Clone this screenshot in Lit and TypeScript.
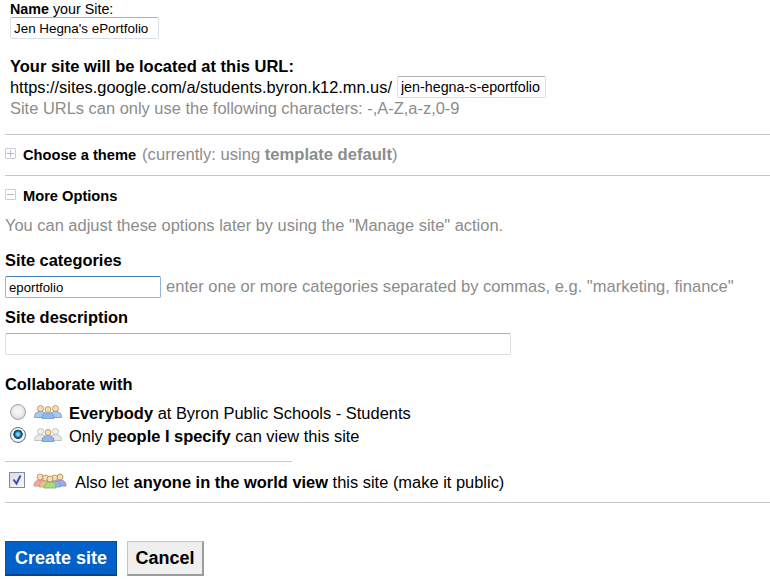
import { LitElement, html, css, svg } from "lit";
import { customElement } from "lit/decorators.js";

const person = (x: number, y: number, skin: string, body: string, edge: string, head = "#a98a5e") => svg`
  <path d="M${x - 6} ${y + 12}c0-4 2.200-6 6-6s6 2 6 6z" fill="${body}" stroke="${edge}" stroke-width=".8"/>
  <circle cx="${x}" cy="${y + 3}" r="3" fill="${skin}" stroke="${head}" stroke-width=".8"/>`;

const skin = "#fbdcae";
const blue = "#a9c8f2";
const blueEdge = "#6f94c8";
const grayBody = "#e8e8e8";
const grayEdge = "#b8b8b8";

const groupBlue = svg`<svg class="ppl" width="28" height="14" viewBox="0 0 28 14">
  ${person(6.5, 0.5, skin, blue, blueEdge)}${person(21.5, 0.5, skin, blue, blueEdge)}${person(14, 1.500, skin, "#8fb6ee", blueEdge)}</svg>`;
const groupGray = svg`<svg class="ppl" width="28" height="14" viewBox="0 0 28 14">
  ${person(6.5, 0.5, "#f0f0f0", grayBody, grayEdge, grayEdge)}${person(21.5, 0.5, "#f0f0f0", grayBody, grayEdge, grayEdge)}${person(14, 1.500, skin, "#8fb6ee", blueEdge)}</svg>`;
const groupWorld = svg`<svg class="ppl" width="34" height="16" viewBox="0 0 34 16">
  ${person(7, 1, skin, "#f3a6a0", "#c98580")}${person(27, 1, skin, "#a7a6ea", "#7d7cc4")}
  ${person(12.500, 2, skin, "#f4c48e", "#c99a66")}${person(21.500, 2, skin, "#8fb6ee", blueEdge)}${person(17, 3, skin, "#a9dc7e", "#80b058")}</svg>`;

@customElement("app-root")
export class AppRoot extends LitElement {
  static styles = css`
    :host { display: block; width: 770px; height: 579px; overflow: hidden; background: #fff; color: #000;
      font-family: "Liberation Sans", Arial, sans-serif; font-size: 16.45px; line-height: 18px; }
    .page { padding: 1px 0 0 5px; }
    .name { padding-left: 5px; font-size: 14.3px; line-height: 16px; }
    input[type="text"] { display: block; box-sizing: border-box; margin: 0; padding: 0 3px; background: #fff; color: #000;
      font: 13.4px "Liberation Sans", Arial, sans-serif; outline: none;
      border: 1px solid #dcdfe4; border-top-color: #b0b0b0; border-radius: 2px; }
    .site-name { width: 149px; height: 22px; }
    .url { padding-left: 5px; margin-top: 18px; }
    .url h2 { margin: 0; font-size: 16.5px; line-height: 18px; font-weight: bold; }
    .url-row { display: flex; align-items: center; gap: 5px; height: 22px; margin-top: 1px; font-size: 16.36px; }
    .url-row input { width: 149px; height: 22px; font-size: 14.3px; }
    .hint { color: #8c8c8c; }
    .url .hint { margin-top: 0; line-height: 20px; }
    hr { border: 0; height: 1px; background: #c8c8c8; margin: 0; }
    .h1 { margin-top: 16px; }
    .toggle { display: flex; align-items: center; font-size: 14.65px; line-height: 16px; font-weight: bold; }
    .box { box-sizing: border-box; width: 11px; height: 11px; border: 1px solid #c9cdd6; margin-right: 7px; margin-top: -4px;
      display: block; position: relative; flex: none; border-radius: 1px; }
    .box::before { content: ""; position: absolute; left: 1px; right: 1px; top: 4px; height: 1px; background: #b4b8c2; }
    .box.plus::after { content: ""; position: absolute; top: 1px; bottom: 1px; left: 4px; width: 1px; background: #b4b8c2; }
    .theme { height: 40px; }
    .theme .rest { font-size: 16.6px; font-weight: normal; color: #8c8c8c; margin-left: 6px; }
    .theme .rest b { font-weight: bold; }
    .more { margin-top: 12px; }
    .adjust { margin-top: 12px; line-height: 18px; }
    .label { margin: 0; font-size: 16.4px; font-weight: bold; line-height: 18px; }
    .cats { margin-top: 17px; }
    .cat-row { display: flex; align-items: center; gap: 5px; margin-top: 7px; height: 22px; }
    .cat-row input { width: 156px; height: 22px; border-color: #8fb6d8; border-top-color: #3f7fb5; font-size: 13.2px; }
    .cat-row .hint { font-size: 16.55px; }
    .desc { margin-top: 10px; }
    input.desc-in[type="text"] { width: 506px; height: 22px; margin-top: 7px; }
    .collab { margin-top: 20px; }
    .opt { display: flex; align-items: center; height: 23px; padding-left: 5px; }
    .opts { margin-top: 8px; }
    .radio { width: 16px; height: 16px; border-radius: 50%; flex: none; box-sizing: border-box; border: 1px solid #a4a4a4;
      background: radial-gradient(circle at 50% 45%, #f4f4f4 0 30%, #e4e4e4 60%, #bdbdbd 100%); margin-right: 8px; margin-top: -2px; }
    .radio.on { border-color: #6a6f78; background: radial-gradient(circle at 50% 45%, #7ed0ee 0 12%, #0e6fa6 30%, #063f6a 42%, #fff 48%, #e2e2e2 80%, #b0b0b0 100%); }
    .ppl { display: block; flex: none; margin-right: 7px; margin-top: -2px; }
    .short { width: 287px; margin-top: 14px; }
    .world { display: flex; align-items: center; height: 40px; padding-left: 4px; }
    .check { box-sizing: border-box; width: 16px; height: 16px; border: 1px solid #7f8aa3; background: linear-gradient(135deg, #dcdce4, #f7f7fa);
      margin-right: 8px; flex: none; display: block; margin-top: -4px; }
    .world .ppl { margin-right: 8px; }
    .actions { display: flex; gap: 10px; margin-top: 38px; }
    button { box-sizing: border-box; height: 35px; margin: 0; padding: 0; font: bold 18px "Liberation Sans", Arial, sans-serif; }
    .create { width: 112px; background: #0061c8; color: #fff; border: 1px solid #0053a8; border-right-color: #00468e; border-bottom: 2px solid #00468e; }
    .cancel { width: 77px; background: #efefef; color: #000; border: 1px solid #c4c4c4; border-right: 2px solid #9c9c9c; border-bottom: 2px solid #9c9c9c; }
  `;

  render() {
    return html`<div class="page">
      <div class="name"><b>Name</b> your Site:
        <input class="site-name" type="text" .value=${"Jen Hegna's ePortfolio"} />
      </div>
      <div class="url">
        <h2>Your site will be located at this URL:</h2>
        <div class="url-row"><span>https://sites.google.com/a/students.byron.k12.mn.us/</span>
          <input type="text" .value=${"jen-hegna-s-eportfolio"} /></div>
        <div class="hint">Site URLs can only use the following characters: -,A-Z,a-z,0-9</div>
      </div>
      <hr class="h1" />
      <div class="toggle theme"><span class="box plus"></span>Choose a theme
        <span class="rest">(currently: using <b>template default</b>)</span></div>
      <hr />
      <div class="toggle more"><span class="box"></span>More Options</div>
      <div class="hint adjust">You can adjust these options later by using the "Manage site" action.</div>
      <div class="cats">
        <h3 class="label">Site categories</h3>
        <div class="cat-row"><input type="text" .value=${"eportfolio"} />
          <span class="hint">enter one or more categories separated by commas, e.g. "marketing, finance"</span></div>
      </div>
      <h3 class="label desc">Site description</h3>
      <input class="desc-in" type="text" />
      <h3 class="label collab">Collaborate with</h3>
      <div class="opts">
        <div class="opt"><span class="radio"></span>${groupBlue}<span><b>Everybody</b> at Byron Public Schools - Students</span></div>
        <div class="opt"><span class="radio on"></span>${groupGray}<span>Only <b>people I specify</b> can view this site</span></div>
      </div>
      <hr class="short" />
      <div class="world">
        <svg class="check" viewBox="0 0 14 14"><path d="M3.500 6.500l3 4 4-8" fill="none" stroke="#3d50a8" stroke-width="2"/></svg>
        ${groupWorld}<span>Also let <b>anyone in the world view</b> this site (make it public)</span>
      </div>
      <hr />
      <div class="actions"><button class="create">Create site</button><button class="cancel">Cancel</button></div>
    </div>`;
  }
}
